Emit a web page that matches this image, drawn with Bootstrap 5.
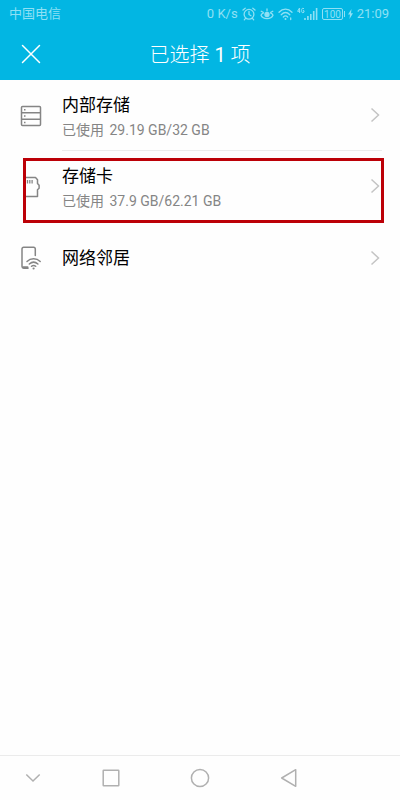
<!DOCTYPE html>
<html lang="zh-CN">
<head>
<meta charset="utf-8">
<meta name="viewport" content="width=device-width, initial-scale=1">
<title>已选择 1 项</title>
<link href="https://cdn.jsdelivr.net/npm/bootstrap@5.3.0/dist/css/bootstrap.min.css" rel="stylesheet">
<style>
  body { font-family: Roboto, "Noto Sans CJK SC", sans-serif; background: #fefefe; color: #111; }
  svg { display: block; flex: none; fill: none; stroke: currentColor; }
  .top-area { background: #02b6e3; }
  .status-line { height: 28px; padding: 0 11px 0 9px; font-size: 13px; line-height: 28px; color: #8fe0f4; }
  .status-icons { gap: 4px; margin: 0 4px; }
  .battery { gap: 2px; }
  .title-line { display: grid; grid-template-columns: 62px 1fr 62px; height: 52px; color: #fff; }
  .title-line h1 { padding-top: 2px; font-size: 20px; line-height: 50px; font-weight: 300; }
  .place { min-height: 71px; color: #000; }
  .place-icon { width: 62px; padding-left: 20px; color: #858585; }
  .place-body { min-height: 71px; margin-right: 18px; }
  .ruled { border-bottom: 1px solid #ececec; }
  .place-text { padding-top: 6px; }
  .place-name { font-size: 17px; line-height: 24px; }
  .place-usage { font-size: 14px; line-height: 26px; color: #858585; }
  .usage-figures { margin-left: 2px; }
  .arrow { margin-right: 2px; color: #c4c4c4; }
  .highlight-box { position: absolute; top: 7px; right: 16px; bottom: -1px; left: 23px; border: 3px solid #bc0007; pointer-events: none; }
  .system-keys { display: grid; grid-template-columns: 3fr 4fr 4fr 4fr 3fr; height: 45px; border-top: 1px solid #ebebeb; color: #b0b0b0; }
</style>
</head>
<body class="d-flex flex-column min-vh-100">
<header class="top-area">
  <div class="status-line d-flex align-items-center">
    <span class="me-auto">中国电信</span>
    <span>0 K/s</span>
    <span class="status-icons d-flex align-items-center">
      <svg width="14" height="14" viewBox="0 0 14 14" stroke-width="1.3" stroke-linecap="round"><circle cx="7" cy="7.3" r="4.9"/><path d="M7 4.5v3l2 1.2M1 3l2.2-1.8M13 3l-2.2-1.8M3.5 11.4l-1.2 1.4M10.5 11.4l1.2 1.4"/></svg>
      <svg width="14" height="14" viewBox="0 0 14 14" stroke-width="1.3" stroke-linecap="round"><path d="M3.500 5.800C2 6.500 1 7.500 1 8.300c2 4.500 10 4.500 12 0 0-.8-1-1.800-2.500-2.500M7 3.800V2M3.200 5.300L1.200 4.200M10.800 5.300l2-1.100"/><circle cx="7" cy="7.500" r="2" fill="currentColor"/></svg>
      <svg width="15" height="14" viewBox="0 0 15 14" stroke-width="1.3" stroke-linecap="round"><path d="M1 5.200c3.800-4 9.200-4 13 0M3.200 7.700c2.600-2.600 6-2.600 8.600 0M5.300 10c1.300-1.300 3.100-1.300 4.400 0"/><circle cx="7.500" cy="12" r="1" fill="currentColor" stroke="none"/><path d="M12.700 11v1.500"/></svg>
      <svg width="21" height="14" viewBox="0 0 21 14" stroke-width="1"><path d="M2.500 1L.6 4.300h2.600M2.600 1v5M7 1.800c-1.500-1.300-2.400-.3-2.400 1.700s.9 3 2.400 1.600V3.700H5.900"/><path stroke-width="1.600" d="M8 11v2M10.900 9v4M13.800 7v6M16.700 4v9M19.600 1v12"/></svg>
      <span class="battery d-flex align-items-center">
        <svg width="24" height="14" viewBox="0 0 24 14" stroke-width="1"><rect x=".5" y="1.500" width="20" height="11" rx="1.500"/><path d="M22.500 4v6"/><text x="10.500" y="10.500" text-anchor="middle" font-size="10" fill="currentColor" stroke="none">100</text></svg>
        <svg width="5" height="10" viewBox="0 0 5 10"><path fill="currentColor" stroke="none" d="M3.500 0L0 5.600h2L1.500 10 5 4.300H3z"/></svg>
      </span>
    </span>
    <span>21:09</span>
  </div>
  <div class="title-line">
    <button type="button" class="btn border-0 p-0 text-white d-flex align-items-center justify-content-center" aria-label="关闭"><svg width="20" height="20" viewBox="0 0 20 20" stroke-width="1.500" stroke-linecap="round"><path d="M1.500 1.500l17 17M18.500 1.500l-17 17"/></svg></button>
    <h1 class="m-0 text-center">已选择 <span class="fw-normal">1</span> 项</h1>
  </div>
</header>
<main class="flex-grow-1">
  <a href="#internal" class="place d-flex align-items-center text-decoration-none">
    <span class="place-icon"><svg width="22" height="22" viewBox="0 0 22 22" stroke-width="1.500"><rect x="1.500" y="1.500" width="19" height="19" rx="1"/><path d="M1.500 7.800h19M1.500 14.200h19M4 4.700h1.500M4 11h1.500M4 17.400h1.500"/></svg></span>
    <span class="place-body ruled flex-grow-1 d-flex align-items-center justify-content-between">
      <span class="place-text"><span class="place-name d-block">内部存储</span><span class="place-usage d-block">已使用<span class="usage-figures"> 29.19 GB/32 GB</span></span></span>
      <svg class="arrow" width="10" height="16" viewBox="0 0 10 16" stroke-width="1.500"><path d="M1.500 1.500L8.500 8l-7 6.500"/></svg>
    </span>
  </a>
  <a href="#card" class="place d-flex align-items-center text-decoration-none position-relative">
    <span class="place-icon"><svg width="22" height="22" viewBox="0 0 22 22" stroke-width="1.500" stroke-linejoin="round"><path d="M5 1.500h10.500l2 2.200v3.800l1.600 1.800v3l-1.600 1.500v6.700H5"/><path stroke-width="1.300" d="M7.500 4v3.500M9.800 4v3.500M12.100 4v3.500"/></svg></span>
    <span class="place-body ruled flex-grow-1 d-flex align-items-center justify-content-between">
      <span class="place-text"><span class="place-name d-block">存储卡</span><span class="place-usage d-block">已使用<span class="usage-figures"> 37.9 GB/62.21 GB</span></span></span>
      <svg class="arrow" width="10" height="16" viewBox="0 0 10 16" stroke-width="1.500"><path d="M1.500 1.500L8.500 8l-7 6.500"/></svg>
    </span>
    <span class="highlight-box"></span>
  </a>
  <a href="#network" class="place d-flex align-items-center text-decoration-none">
    <span class="place-icon"><svg width="22" height="24" viewBox="0 0 22 24" stroke-width="1.500" stroke-linecap="round"><path d="M15.300 9.500V3q0-1.700-1.700-1.700H3.700Q2 1.300 2 3v17.500q0 1.700 1.700 1.700H8"/><path stroke-width="2" d="M3 21.300h4.500"/><path d="M7 15.500c3.700-3.600 9.500-3.600 13.200 0M9.300 18c2.600-2.300 6-2.300 8.600 0M11.500 20.300c1.300-1.100 2.900-1.100 4.200 0"/><circle cx="13.600" cy="22.500" r="1.100" fill="currentColor" stroke="none"/></svg></span>
    <span class="place-body flex-grow-1 d-flex align-items-center justify-content-between">
      <span class="place-name">网络邻居</span>
      <svg class="arrow" width="10" height="16" viewBox="0 0 10 16" stroke-width="1.500"><path d="M1.500 1.500L8.500 8l-7 6.500"/></svg>
    </span>
  </a>
</main>
<nav class="system-keys" aria-label="系统导航">
  <button type="button" class="btn border-0 p-0 text-reset d-flex align-items-center justify-content-center" aria-label="收起"><svg width="16" height="10" viewBox="0 0 16 10" stroke-width="1.500"><path d="M1.300 1.500L8 8l6.700-6.500"/></svg></button>
  <button type="button" class="btn border-0 p-0 text-reset d-flex align-items-center justify-content-center" aria-label="最近任务"><svg width="18" height="18" viewBox="0 0 18 18" stroke-width="1.500"><rect x="1.200" y="1.200" width="15.600" height="15.600" rx=".6"/></svg></button>
  <button type="button" class="btn border-0 p-0 text-reset d-flex align-items-center justify-content-center" aria-label="主页"><svg width="20" height="20" viewBox="0 0 20 20" stroke-width="1.500"><circle cx="10" cy="10" r="8.600"/></svg></button>
  <button type="button" class="btn border-0 p-0 text-reset d-flex align-items-center justify-content-center" aria-label="返回"><svg width="18" height="20" viewBox="0 0 18 20" stroke-width="1.500" stroke-linejoin="round"><path d="M1.700 10L15.700 1.700v16.600z"/></svg></button>
</nav>
<script src="https://cdn.jsdelivr.net/npm/bootstrap@5.3.0/dist/js/bootstrap.bundle.min.js"></script>
</body>
</html>
